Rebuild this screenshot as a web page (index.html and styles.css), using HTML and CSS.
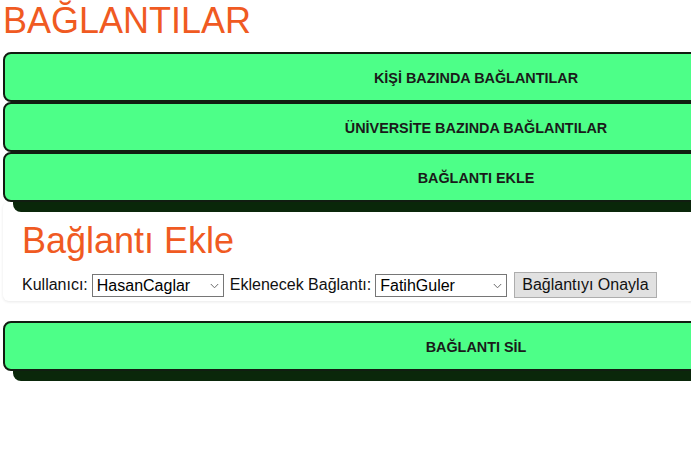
FILE: index.html
```html
<!DOCTYPE html>
<html lang="tr">
<head>
<meta charset="utf-8">
<title>Bağlantılar</title>
<link rel="stylesheet" href="styles.css">
</head>
<body>
<div class="page">
  <h1 class="title">BAĞLANTILAR</h1>
  <nav class="menu">
    <button class="nav-btn" type="button">KİŞİ BAZINDA BAĞLANTILAR</button>
    <button class="nav-btn" type="button">ÜNİVERSİTE BAZINDA BAĞLANTILAR</button>
    <button class="nav-btn" type="button">BAĞLANTI EKLE</button>
  </nav>
  <section class="panel">
    <h2 class="panel-title">Bağlantı Ekle</h2>
    <form class="row">
      <label class="lbl" for="user">Kullanıcı:</label>
      <span class="sel-wrap">
        <select class="sel" id="user"><option>HasanCaglar</option></select>
        <svg class="chev" width="9" height="6" viewBox="0 0 9 6"><path d="M0.8 1 L4.5 4.8 L8.2 1" fill="none" stroke="#6b6b6b" stroke-width="1"/></svg>
      </span>
      <label class="lbl lbl-2" for="conn">Eklenecek Bağlantı:</label>
      <span class="sel-wrap">
        <select class="sel" id="conn"><option>FatihGuler</option></select>
        <svg class="chev" width="9" height="6" viewBox="0 0 9 6"><path d="M0.8 1 L4.5 4.8 L8.2 1" fill="none" stroke="#6b6b6b" stroke-width="1"/></svg>
      </span>
      <button class="confirm" type="button">Bağlantıyı Onayla</button>
    </form>
  </section>
  <button class="nav-btn delete" type="button">BAĞLANTI SİL</button>
</div>
</body>
</html>
```

FILE: styles.css
```css
html {
  overflow: hidden;
}
body {
  margin: 0;
  background: #ffffff;
  font-family: "Liberation Sans", Arial, sans-serif;
  color: #111;
}
.page {
  width: 946px;
  padding-left: 3px;
  padding-bottom: 20px;
}
.title {
  margin: 0;
  font-size: 36px;
  font-weight: normal;
  line-height: normal;
  color: #f05a22;
}
.menu {
  display: flex;
  flex-direction: column;
  margin-top: 10px;
}
.nav-btn {
  display: block;
  box-sizing: border-box;
  width: 100%;
  height: 50px;
  margin: 0;
  padding: 2px 0 0;
  background: #4dff88;
  border: 2px solid #111d11;
  border-radius: 8px;
  box-shadow: 10px 10px 0 #0a270a;
  font-family: "Liberation Sans", Arial, sans-serif;
  font-size: 14.4px;
  font-weight: bold;
  color: #1a1a1a;
  text-align: center;
  cursor: pointer;
}
.panel {
  padding: 18px 18px 3px 19px;
  border-radius: 6px;
  box-shadow: 0 1px 3px rgba(0, 0, 0, 0.09);
}
.panel-title {
  margin: 0;
  font-size: 36px;
  font-weight: normal;
  line-height: normal;
  color: #f05a22;
}
.row {
  display: flex;
  align-items: center;
  height: 26px;
  margin-top: 10px;
  font-size: 16px;
  color: #111;
}
.lbl {
  margin-right: 4px;
}
.lbl-2 {
  margin-left: 6px;
  margin-right: 4px;
}
.sel-wrap {
  position: relative;
  display: block;
  width: 132px;
  height: 23px;
}
.sel {
  box-sizing: border-box;
  display: block;
  width: 132px;
  height: 23px;
  margin: 0;
  padding: 0 20px 0 4px;
  border: 1px solid #767676;
  border-radius: 0;
  background: #fff;
  font-family: "Liberation Sans", Arial, sans-serif;
  font-size: 16px;
  color: #000;
  -webkit-appearance: none;
  appearance: none;
}
.chev {
  position: absolute;
  right: 5px;
  top: 9px;
  pointer-events: none;
}
.confirm {
  box-sizing: border-box;
  height: 26px;
  margin: 0 0 0 7px;
  padding: 0 7px;
  background: #e1e1e1;
  border: 1px solid #adadad;
  border-radius: 0;
  font-family: "Liberation Sans", Arial, sans-serif;
  font-size: 16px;
  color: #111;
}
.delete {
  margin-top: 20px;
}
```
